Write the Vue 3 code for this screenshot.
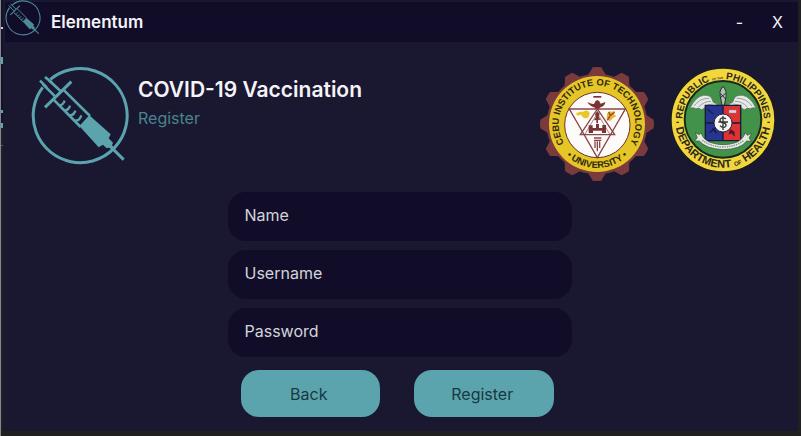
<script setup>
import { reactive } from 'vue'

const fields = [
  { id: 'name', label: 'Name', type: 'text' },
  { id: 'username', label: 'Username', type: 'text' },
  { id: 'password', label: 'Password', type: 'password' }
]
const form = reactive({ name: '', username: '', password: '' })
const teeth = Array.from({ length: 12 }, (_, i) => `rotate(${i * 30} 201 190)`)
</script>

<template>
  <div class="desktop">
    <div class="edge"></div>
    <main class="window">
      <svg width="0" height="0" class="defs" aria-hidden="true">
        <symbol id="syringe" viewBox="88 202 300 300">
          <g fill="none" stroke="currentColor">
            <path d="M149 242A141 141 0 1 1 126 266" stroke-width="9" />
            <path d="M133 235L155 253M118 246L138 266" stroke-width="8" />
            <path d="M144 244L180 278M127 257L164 294" stroke-width="8" />
            <path d="M133 326L212 249" stroke-width="9" />
            <path d="M158 302L240 385M188 273L268 352" stroke-width="8" />
            <path d="M174 320q13 1 18-14M190 335q14 1 18-14M206 350q14 1 18-14M222 366q15 1 20-16" stroke-width="7" />
            <path d="M334 448L369 483" stroke-width="9" />
          </g>
          <path d="M236 382L266 350L330 407L324 419L337 432L334 440L343 449L336 456L326 447L317 448L307 438L294 446Z" fill="currentColor" />
        </symbol>
      </svg>

      <header class="titlebar">
        <svg class="mark" aria-hidden="true"><use href="#syringe" /></svg>
        <span class="app">Elementum</span>
        <button class="ctl" type="button" aria-label="Minimize">-</button>
        <button class="ctl" type="button" aria-label="Close">X</button>
      </header>

      <section class="hero">
        <svg class="logo" aria-hidden="true"><use href="#syringe" /></svg>
        <div class="titles">
          <h1>COVID-19 Vaccination</h1>
          <p>Register</p>
        </div>

        <svg class="seal cit" viewBox="27 16 348 348" role="img" aria-label="Cebu Institute of Technology University">
          <defs>
            <path id="cit-top" d="M117 268A115 115 0 1 1 285 268" />
            <path id="cit-bottom" d="M80 244A133 133 0 0 0 322 244" />
          </defs>
          <circle cx="201" cy="190" r="151" fill="#7b3b3c" />
          <path v-for="t in teeth" :key="t" :transform="t" d="M172 46L184 27L188 20Q201 18 214 20L218 27L230 46Z" fill="#7b3b3c" />
          <circle cx="201" cy="190" r="144" fill="#e6c527" />
          <circle cx="202" cy="193" r="98" fill="#fdfbfa" stroke="#6b3327" stroke-width="3" />
          <g class="cit-text">
            <text><textPath href="#cit-top" startOffset="50%" text-anchor="middle">CEBU INSTITUTE OF TECHNOLOGY</textPath></text>
            <text><textPath href="#cit-bottom" startOffset="50%" text-anchor="middle">• UNIVERSITY •</textPath></text>
          </g>
          <g fill="none" stroke="#8a4748" stroke-width="4">
            <path d="M118 145H286L202 291Z" />
            <path d="M202 145L151 222H254Z" />
            <path d="M164 222L202 158L240 222M135 175L118 145M269 175L286 145" stroke-width="2" />
            <path d="M192 232H214M192 239H214M195 242V262M202 242V272M209 242V262" />
          </g>
          <g fill="#7b3436">
            <path d="M172 124Q185 131 192 130Q195 120 202 118Q209 120 212 129L226 124Q225 137 209 141V144H195V141Q179 137 172 124Z" />
            <path d="M190 106H214V111H190Z" />
            <path d="M195 160L202 151L209 160L206 169L212 178L204 177V188H199V178L192 179L198 168Z" />
            <path d="M176 194H188V202H198V190H207V202H217V193H228V217H216V210H189V217H176Z" />
          </g>
          <path d="M138 158Q153 151 160 153Q171 145 179 156Q179 170 169 173Q157 173 154 162L142 165Z" fill="#e7c729" />
          <path d="M231 160Q235 149 245 153L255 150L250 160L259 166L248 173L240 182L230 175Z" fill="#e7b929" />
          <path d="M232 179L241 164L254 155M241 164L236 154" fill="none" stroke="#9c4a35" stroke-width="4" />
        </svg>

        <svg class="seal doh" viewBox="28 16 324 324" role="img" aria-label="Republic of the Philippines Department of Health">
          <defs>
            <path id="doh-top" d="M80 230A122 122 0 1 1 300 230" />
            <path id="doh-bottom" d="M47 178A143 143 0 0 0 333 178" />
          </defs>
          <circle cx="190" cy="178" r="156" fill="#f1d63e" stroke="#1c1d1a" stroke-width="4" />
          <circle cx="190" cy="176" r="115" fill="#429249" stroke="#182819" stroke-width="6" />
          <g class="doh-text">
            <text><textPath href="#doh-top" startOffset="50%" text-anchor="middle">REPUBLIC <tspan class="tiny">OF THE</tspan> PHILIPPINES</textPath></text>
            <text class="lower"><textPath href="#doh-bottom" startOffset="50%" text-anchor="middle">DEPARTMENT <tspan class="small">OF</tspan> HEALTH</textPath></text>
          </g>
          <path d="M50 183h8v4h-8zM323 183h8v4h-8z" fill="#3a3920" />
          <path d="M187 79Q177 94 182 108L187 134H194L199 108Q202 92 193 79Z" fill="#b8bdb9" stroke="#203326" stroke-width="3" />
          <path d="M182 111L198 98M182 98L198 115" stroke="#203326" stroke-width="3" />
          <g fill="#e5e8e5" stroke="#58695d" stroke-width="2">
            <path d="M180 129Q159 130 158 118Q155 102 131 104Q108 108 91 142Q104 140 108 144Q119 141 125 147L141 140L151 144L166 134Z" />
            <path d="M200 129Q221 130 222 118Q225 102 249 104Q272 108 289 142Q276 140 272 144Q261 141 255 147L239 140L229 144L214 134Z" />
          </g>
          <g fill="none" stroke="#718177" stroke-width="2">
            <path d="M103 136Q122 111 149 113M116 140Q133 121 154 122M132 141Q144 129 160 130M277 136Q258 111 231 113M264 140Q247 121 226 122M248 141Q236 129 220 130" />
          </g>
          <path d="M137 134H190V240H137Z" fill="#26358e" />
          <path d="M190 134H243V240H190Z" fill="#dd3335" />
          <path d="M137 134H243V240H137ZM190 134V240M137 187H243" fill="none" stroke="#171a38" stroke-width="4" />
          <path d="M207 147H231V158H207Z" fill="#e6cbd0" stroke="#963644" stroke-width="2" />
          <path d="M143 145L160 159M149 216L170 202M158 202L171 218" stroke="#111c50" stroke-width="4" />
          <path d="M211 205L225 213V228L215 218L207 222Z" fill="#501724" />
          <circle cx="190" cy="187" r="27" fill="#f4f5f4" stroke="#272839" stroke-width="3" />
          <path d="M190 166V208M199 174Q181 168 181 179Q182 186 193 187Q202 190 198 197Q192 204 181 195M176 184H205" fill="none" stroke="#343637" stroke-width="4" />
          <path d="M107 216L119 222L124 216Q131 240 158 247Q191 257 224 247Q249 240 257 216L263 224L276 218L268 232L275 242L261 241Q243 266 190 267Q138 264 119 241L105 241L113 231Z" fill="#e5eae4" stroke="#314b36" stroke-width="2" />
          <path d="M128 239Q154 258 190 259Q229 258 253 239" fill="none" stroke="#7e9181" stroke-width="4" stroke-dasharray="4 3" />
        </svg>
      </section>

      <form class="form" @submit.prevent>
        <input
          v-for="f in fields"
          :id="f.id"
          :key="f.id"
          v-model="form[f.id]"
          :type="f.type"
          :placeholder="f.label"
          :aria-label="f.label"
        />
        <div class="actions">
          <button type="button">Back</button>
          <button type="submit">Register</button>
        </div>
      </form>
    </main>
  </div>
</template>

<style>
body {
  background: #202020;
}
</style>

<style scoped>
.desktop {
  display: flex;
  min-height: 100vh;
  box-sizing: border-box;
  padding: 0 3px 5px 0;
  font-family: Inter, "Liberation Sans", sans-serif;
  font-size: 16px;
  line-height: 20px;
  color: #f4f4f7;
}
.edge {
  flex: none;
  width: 2px;
  margin-bottom: -5px;
  border-left: 1px solid #85858c;
  background: linear-gradient(#14122b 27px, #d0d0d6 27px 29px, #14122b 29px 57px, #5ba4ae 57px 64px, #14122b 64px 110px, #5ba4ae 110px 113px, #14122b 113px 123px, #5ba4ae 123px 128px, #202020 128px 145px, #55555c 145px 146px, #202020 146px);
}
.window {
  flex: 1;
  min-width: 0;
  background: #1a1731;
}
.defs {
  position: absolute;
}
.titlebar {
  display: flex;
  align-items: center;
  height: 40px;
  margin: 2px 0 0 2px;
  background: #110d29;
}
.mark {
  width: 36px;
  height: 36px;
  margin-bottom: 8px;
  color: #4c8b98;
}
.app {
  flex: 1;
  margin-left: 10px;
  font-size: 17px;
  font-weight: 600;
}
.ctl {
  width: 38px;
  padding: 0 3px 0 0;
  border: 0;
  background: none;
  font: inherit;
  color: inherit;
}
.hero {
  display: flex;
  align-items: flex-start;
  padding: 24px 21px 0 27px;
}
.logo {
  flex: none;
  width: 100px;
  height: 100px;
  color: #5ba4ae;
}
.titles {
  flex: 1;
  padding: 12px 0 0 8px;
}
h1 {
  margin: 0;
  font-size: 21px;
  line-height: 24px;
  font-weight: 600;
}
p {
  margin: 6px 0 0;
  color: #48858e;
}
.seal {
  flex: none;
}
.cit {
  width: 116px;
  height: 116px;
  margin-right: 14px;
}
.doh {
  width: 108px;
  height: 108px;
}
.cit-text {
  font-size: 28px;
  font-weight: 700;
  font-family: "Liberation Sans", sans-serif;
  fill: #30280e;
}
.doh-text {
  font-size: 29px;
  font-weight: 700;
  font-family: "Liberation Sans", sans-serif;
  fill: #292819;
}
.doh-text .lower {
  font-size: 33px;
}
.tiny {
  font-size: 9px;
}
.small {
  font-size: 18px;
}
.form {
  display: flex;
  flex-direction: column;
  gap: 9px;
  width: 344px;
  margin: 10px auto 0;
  padding-right: 2px;
}
input {
  height: 49px;
  box-sizing: border-box;
  padding: 0 17px 4px;
  border: 0;
  border-radius: 18px;
  background: #110d29;
  color: #d4d4da;
  font: inherit;
}
input::placeholder {
  color: #d4d4da;
  opacity: 1;
}
.actions {
  display: flex;
  gap: 34px;
  padding: 4px 18px 0 13px;
}
.actions button {
  flex: 1;
  height: 47px;
  padding: 0 3px 0 0;
  border: 0;
  border-radius: 18px;
  background: #5ba4ae;
  color: #17393f;
  font: inherit;
}
</style>
